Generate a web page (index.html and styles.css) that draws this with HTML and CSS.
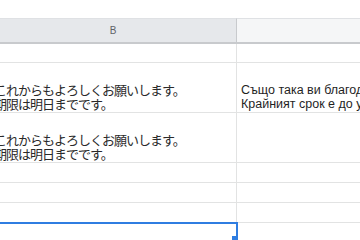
FILE: index.html
```html
<!DOCTYPE html>
<html lang="ja">
<head>
  <meta charset="UTF-8">
  <meta name="viewport" content="width=device-width, initial-scale=1.0">
  <title>Sheet</title>
  <link rel="stylesheet" href="styles.css">
</head>
<body>

  <div class="sheet">
    <div class="col-head active">B</div>
    <div class="col-head"></div>

    <div class="cell row-1"></div>
    <div class="cell row-1"></div>

    <div class="cell row-tall">
      <div class="text ja">
        <span>これからもよろしくお願いします。</span>
        <span>期限は明日までです。</span>
      </div>
    </div>
    <div class="cell row-tall">
      <div class="text">
        <span>Също така ви благодаря.</span>
        <span>Крайният срок е до утре.</span>
      </div>
    </div>

    <div class="cell row-tall">
      <div class="text ja">
        <span>これからもよろしくお願いします。</span>
        <span>期限は明日までです。</span>
      </div>
    </div>
    <div class="cell row-tall"></div>

    <div class="cell"></div>
    <div class="cell"></div>
    <div class="cell"></div>
    <div class="cell"></div>
    <div class="cell"></div>
    <div class="cell"></div>

    <div class="cell selected"></div>
    <div class="cell"></div>
  </div>

</body>
</html>
```

FILE: styles.css
```css
* {
  margin: 0;
  padding: 0;
  box-sizing: border-box;
}

body {
  width: 360px;
  height: 240px;
  overflow: hidden;
  background-color: #fff;
  font-family: "Liberation Sans", "Noto Sans CJK JP", sans-serif;
  color: #1f1f1f;
}

.sheet {
  display: grid;
  grid-template-columns: 249px 140px;
  margin-top: 18px;
  margin-left: -12px; /* column B is scrolled partly out of view */
}

.col-head {
  height: 26px;
  border-top: 1px solid #dfe1e4;
  border-bottom: 2px solid #c8cacd;
  border-right: 1px solid #c8cacd;
  background-color: #f5f6f7;
  font-size: 10px;
  color: #5f6368;
  display: flex;
  align-items: center;
  justify-content: center;
  padding-left: 2px;
}

.col-head.active {
  background-color: #e6e8eb;
}

.cell {
  height: 20px;
  border-right: 1px solid #e2e3e3;
  border-bottom: 1px solid #e2e3e3;
  overflow: hidden;
  display: flex;
  align-items: flex-end;
  padding: 0 3px 1px 4px;
}

.cell.row-1 {
  height: 19px;
}

.cell.row-tall {
  height: 50px;
}

.text {
  font-size: 12.5px;
  line-height: 14px;
  white-space: nowrap;
}

.text span {
  display: block;
}

.text.ja {
  margin-left: 2px;
  font-family: "Noto Sans CJK JP", sans-serif;
  font-size: 13px;
  letter-spacing: -1px;
  color: #2a2a2a;
}

.cell.selected {
  position: relative;
  overflow: visible;
  outline: 2px solid #2f7de1;
  outline-offset: -1px;
}

.cell.selected::after {
  content: "";
  position: absolute;
  right: -2px;
  top: 13px;
  width: 6px;
  height: 6px;
  background-color: #2f7de1;
}
```
